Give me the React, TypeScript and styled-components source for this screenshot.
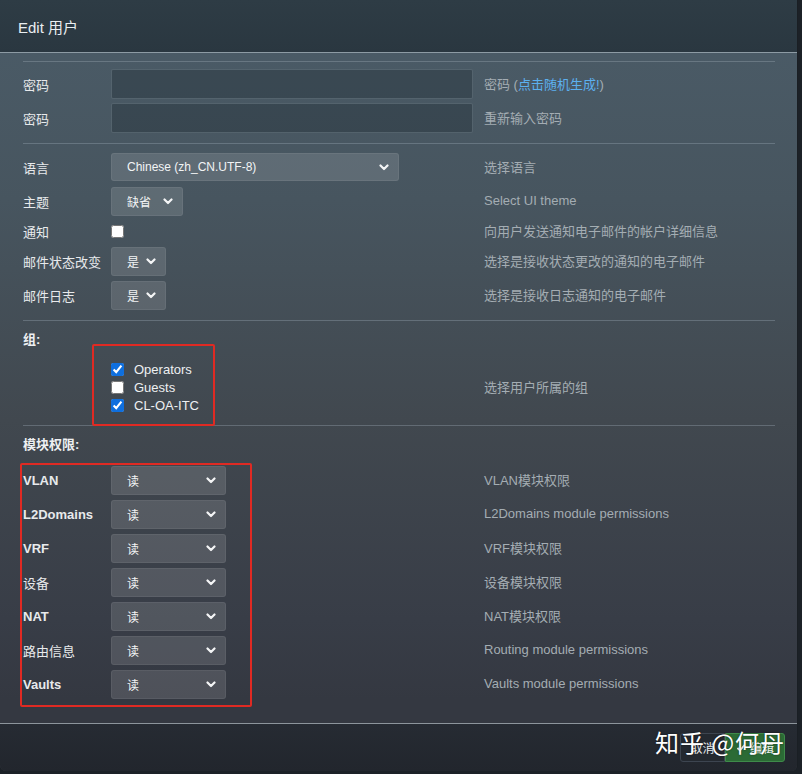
import React from "react";
import styled, { createGlobalStyle } from "styled-components";

const Global = createGlobalStyle`
  html, body { margin: 0; padding: 0; background: #1c2127; }
  body { font-family: "Liberation Sans", Arial, "Noto Sans CJK SC", sans-serif; }
  #root { width: 802px; height: 774px; }
`;

const Modal = styled.div`
  position: relative;
  width: 797px;
  height: 771px;
  display: flex;
  flex-direction: column;
  border-radius: 0 0 6px 6px;
  border-right: 1px solid #1a1f24;
  overflow: hidden;
  background: linear-gradient(180deg, #4b5c68 0px, #47555f 200px, #41484f 420px, #383d47 620px, #343841 700px);
`;

const Header = styled.div`
  height: 53px;
  box-sizing: border-box;
  flex: none;
  display: flex;
  align-items: center;
  padding-left: 18px;
  background: linear-gradient(180deg, #2e3c45, #2a3740);
  border-bottom: 1px solid #8d9ba4;
  color: #e9eef1;
  font-size: 15px;
`;

const Body = styled.div`
  flex: 1;
  padding: 8px 22px 0 23px;
  display: flex;
  flex-direction: column;
  position: relative;
`;

const Sep = styled.div<{ $mt?: number }>`
  height: 1px;
  background: rgba(160, 175, 185, 0.35);
  margin-top: ${(p) => p.$mt ?? 0}px;
`;

const Row = styled.div<{ $h: number; $mt?: number }>`
  height: ${(p) => p.$h}px;
  margin-top: ${(p) => p.$mt ?? 0}px;
  display: grid;
  grid-template-columns: 88px 373px 1fr;
  align-items: center;
`;

const Label = styled.div<{ $bold?: boolean }>`
  color: #e8eaec;
  font-size: 13px;
  font-weight: ${(p) => (p.$bold ? 700 : 400)};
  white-space: nowrap;
`;

const SectionTitle = styled.div<{ $mt: number }>`
  margin-top: ${(p) => p.$mt}px;
  height: 18px;
  display: flex;
  align-items: center;
  color: #eef0f2;
  font-size: 13px;
  font-weight: 700;
`;

const Help = styled.div`
  color: #a4adb3;
  font-size: 13px;
  white-space: nowrap;
  margin-top: -2px;
`;

const Link = styled.span`
  color: #5cb0ef;
`;

const TextInput = styled.div`
  width: 362px;
  height: 30px;
  box-sizing: border-box;
  background: rgba(30, 40, 48, 0.35);
  border: 1px solid rgba(150, 165, 175, 0.3);
  border-radius: 2px;
`;

const SelectBox = styled.div<{ $w: number; $h?: number }>`
  width: ${(p) => p.$w}px;
  height: ${(p) => p.$h ?? 29}px;
  box-sizing: border-box;
  display: flex;
  align-items: center;
  justify-content: space-between;
  padding: 0 9px 0 15px;
  background: rgba(255, 255, 255, 0.13);
  border: 1px solid rgba(255, 255, 255, 0.06);
  border-radius: 3px;
  color: #f2f4f5;
  font-size: 12px;
`;

const Chevron = () => (
  <svg width="10" height="7" viewBox="0 0 10 7">
    <polyline points="1.5,1.5 5,5 8.5,1.5" fill="none" stroke="#f4f5f6" strokeWidth="2.2" strokeLinecap="round" strokeLinejoin="round" />
  </svg>
);

const Select = ({ w, value, h }: { w: number; value: string; h?: number }) => (
  <SelectBox $w={w} $h={h}>
    <span>{value}</span>
    <Chevron />
  </SelectBox>
);

const Check = styled.input.attrs({ type: "checkbox", readOnly: true })`
  width: 13px;
  height: 13px;
  margin: 0;
  accent-color: #0f6fde;
`;

const CheckCell = styled.div`
  display: flex;
  align-items: center;
`;

const CheckList = styled.div`
  display: flex;
  flex-direction: column;
`;

const CheckItem = styled.label`
  height: 18px;
  display: flex;
  align-items: center;
  gap: 10px;
  color: #eef0f2;
  font-size: 13px;
`;

const Annot = styled.div<{ $x: number; $y: number; $w: number; $h: number }>`
  position: absolute;
  left: ${(p) => p.$x}px;
  top: ${(p) => p.$y}px;
  width: ${(p) => p.$w}px;
  height: ${(p) => p.$h}px;
  box-sizing: border-box;
  border: 2.5px solid #e02a23;
  border-radius: 2px;
  pointer-events: none;
`;

const Footer = styled.div`
  height: 48px;
  box-sizing: border-box;
  flex: none;
  border-top: 1px solid #8d959c;
  background: linear-gradient(180deg, #262b33, #22262d);
  display: flex;
  justify-content: flex-end;
  align-items: flex-start;
  padding: 9px 12px 0 0;
`;

const Btn = styled.div<{ $green?: boolean }>`
  height: 29px;
  box-sizing: border-box;
  display: flex;
  align-items: center;
  justify-content: center;
  gap: 4px;
  font-size: 12px;
  color: #eef0f2;
  background: ${(p) => (p.$green ? "#2b6b35" : "#242930")};
  border: 1px solid ${(p) => (p.$green ? "#3f8a4a" : "#3d4550")};
  border-radius: ${(p) => (p.$green ? "0 3px 3px 0" : "3px 0 0 3px")};
  width: ${(p) => (p.$green ? 60 : 45)}px;
`;

const Watermark = styled.div`
  position: absolute;
  left: 655px;
  top: 724px;
  font-family: "Noto Sans CJK SC", sans-serif;
  font-size: 24px;
  color: #ffffff;
  letter-spacing: 1px;
  text-shadow: 0 0 2px rgba(0, 0, 0, 0.6);
  pointer-events: none;
`;

const modules: [string, string, boolean][] = [
  ["VLAN", "VLAN模块权限", true],
  ["L2Domains", "L2Domains module permissions", true],
  ["VRF", "VRF模块权限", true],
  ["设备", "设备模块权限", false],
  ["NAT", "NAT模块权限", true],
  ["路由信息", "Routing module permissions", false],
  ["Vaults", "Vaults module permissions", true],
];

export default function App() {
  return (
    <>
      <Global />
      <Modal>
        <Header>Edit 用户</Header>
        <Body>
          <Sep />
          <Row $h={34} $mt={5}>
            <Label>密码</Label>
            <TextInput />
            <Help>
              密码 (<Link>点击随机生成!</Link>)
            </Help>
          </Row>
          <Row $h={34}>
            <Label>密码</Label>
            <TextInput />
            <Help>重新输入密码</Help>
          </Row>
          <Sep $mt={8} />
          <Row $h={34} $mt={6}>
            <Label>语言</Label>
            <Select w={288} h={28} value="Chinese (zh_CN.UTF-8)" />
            <Help>选择语言</Help>
          </Row>
          <Row $h={34}>
            <Label>主题</Label>
            <Select w={72} value="缺省" />
            <Help>Select UI theme</Help>
          </Row>
          <Row $h={26}>
            <Label>通知</Label>
            <CheckCell>
              <Check />
            </CheckCell>
            <Help>向用户发送通知电子邮件的帐户详细信息</Help>
          </Row>
          <Row $h={34}>
            <Label>邮件状态改变</Label>
            <Select w={55} value="是" />
            <Help>选择是接收状态更改的通知的电子邮件</Help>
          </Row>
          <Row $h={34}>
            <Label>邮件日志</Label>
            <Select w={55} value="是" />
            <Help>选择是接收日志通知的电子邮件</Help>
          </Row>
          <Sep $mt={8} />
          <SectionTitle $mt={8}>组:</SectionTitle>
          <Row $h={54} $mt={13}>
            <span />
            <CheckList>
              <CheckItem>
                <Check defaultChecked />
                Operators
              </CheckItem>
              <CheckItem>
                <Check />
                Guests
              </CheckItem>
              <CheckItem>
                <Check defaultChecked />
                CL-OA-ITC
              </CheckItem>
            </CheckList>
            <Help>选择用户所属的组</Help>
          </Row>
          <Sep $mt={11} />
          <SectionTitle $mt={8}>模块权限:</SectionTitle>
          <div style={{ height: 11 }} />
          {modules.map(([l, h, b]) => (
            <Row $h={34} key={l}>
              <Label $bold={b}>{l}</Label>
              <Select w={115} value="读" />
              <Help>{h}</Help>
            </Row>
          ))}
        </Body>
        <Footer>
          <Btn>取消</Btn>
          <Btn $green>
            <svg width="10" height="10" viewBox="0 0 10 10">
              <polyline points="1.5,5 4,7.5 8.5,2" fill="none" stroke="#fff" strokeWidth="1.8" />
            </svg>
            编辑
          </Btn>
        </Footer>
        <Annot $x={92} $y={344} $w={123} $h={82} />
        <Annot $x={20} $y={463} $w={232} $h={244} />
        <Watermark>知乎 @何丹</Watermark>
      </Modal>
    </>
  );
}
